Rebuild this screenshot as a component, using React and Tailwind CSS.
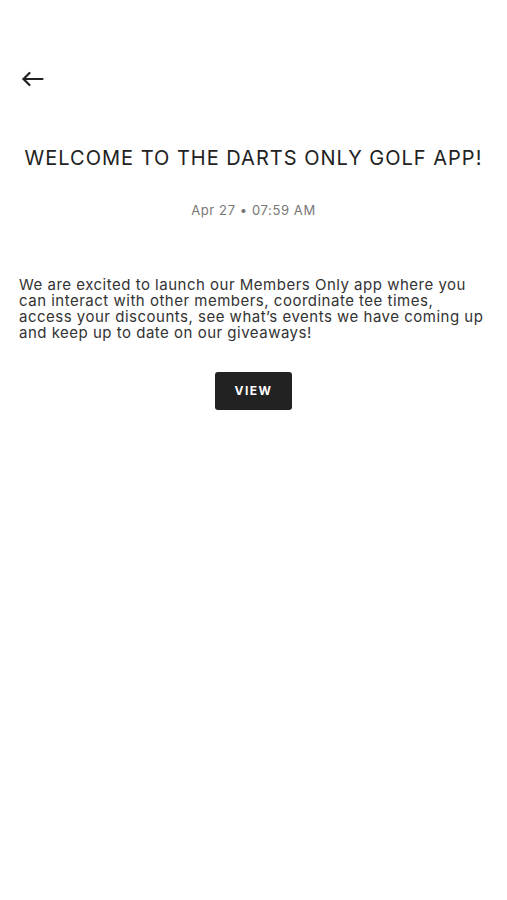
export default function App() {
  return (
    <div className="min-h-[900px] w-full bg-white text-[#222]" style={{ fontFamily: 'Inter, "Noto Sans", sans-serif' }}>
      <div className="h-[64px]" />
      {/* Back */}
      <div className="px-[21px] h-[30px] flex items-center">
        <svg width="23" height="16" viewBox="0 0 23 16" fill="none" stroke="#222" strokeWidth="2.2" strokeLinecap="round" strokeLinejoin="round">
          <path d="M21.5 8H2.5" />
          <path d="M8.5 2L2.5 8L8.5 14" />
        </svg>
      </div>

      {/* Title */}
      <h1 className="mt-[51px] text-center text-[20px] leading-[26px] tracking-[1px] text-[#222]">
        WELCOME TO THE DARTS ONLY GOLF APP!
      </h1>

      {/* Date */}
      <div className="mt-[31px] text-center text-[13px] leading-[16px] text-[#777] tracking-[0.6px]">
        Apr 27 • 07:59 AM
      </div>

      {/* Body */}
      <p className="mt-[59px] px-[19px] text-[15px] leading-[16px] tracking-[0.5px] text-[#333]">
        We are excited to launch our Members Only app where you can interact with other members, coordinate tee times, access your discounts, see what’s events we have coming up and keep up to date on our giveaways!
      </p>

      <div className="mt-[31px] flex justify-center">
        <button className="w-[77px] h-[38px] rounded-[3px] bg-[#222] text-white text-[12px] font-bold tracking-[1.5px] flex items-center justify-center">
          VIEW
        </button>
      </div>
    </div>
  )
}
